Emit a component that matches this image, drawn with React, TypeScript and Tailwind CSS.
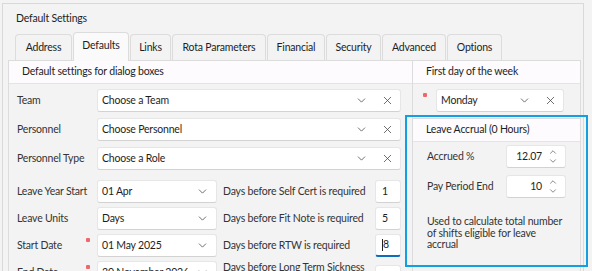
import React from 'react';
import { ChevronDown, ChevronUp, X } from 'lucide-react';

const tabs: Array<[string, string]> = [
  ['Address', 'w-[57px]'],
  ['Defaults', 'w-[56px]'],
  ['Links', 'w-[41px]'],
  ['Rota Parameters', 'w-[94px]'],
  ['Financial', 'w-[58px]'],
  ['Security', 'w-[55px]'],
  ['Advanced', 'w-[64px]'],
  ['Options', 'w-[55px]'],
];

function Star() {
  return <span className="mt-[4px] mr-[7px] h-[4px] w-[4px] rounded-[1px] bg-[#f0676b]" />;
}

function Select({ value, className, clear = true }: { value: string; className: string; clear?: boolean }) {
  return (
    <div className={`flex h-[23px] items-center rounded-[3px] border border-[#e6e6e6] border-b-[#d2d2d2] bg-white pl-[4px] ${className}`}>
      <span className="flex-1 truncate whitespace-nowrap">{value}</span>
      <ChevronDown
        size={13}
        strokeWidth={1.4}
        className={`shrink-0 text-[#444] ${clear ? 'mr-[13px]' : 'mr-[7px]'}`}
      />
      {clear && <X size={13} strokeWidth={1.4} className="mr-[6px] shrink-0 text-[#444]" />}
    </div>
  );
}

function SmallInput({ value, focused }: { value: string; focused?: boolean }) {
  return (
    <div
      className={`flex h-[23px] w-[26px] items-center rounded-[3px] border bg-white pl-[6px] ${
        focused ? 'border-[#e6e6e6] border-b-2 border-b-[#0f6cbd]' : 'border-[#e6e6e6] border-b-[#d2d2d2]'
      }`}
    >
      {focused && <span className="h-[12px] w-px bg-[#222]" />}
      {value}
    </div>
  );
}

function Spinner({ value }: { value: string }) {
  return (
    <div className="flex h-[23px] w-[60px] items-center rounded-[3px] border border-[#e6e6e6] border-b-[#d2d2d2] bg-white pr-[7px]">
      <span className="flex-1 pr-[6px] text-right">{value}</span>
      <div className="flex flex-col items-center text-[#444]">
        <ChevronUp size={10} strokeWidth={1.5} className="-mb-[1px]" />
        <ChevronDown size={10} strokeWidth={1.5} />
      </div>
    </div>
  );
}

function Row({ label, children, star }: { label: string; children: React.ReactNode; star?: boolean }) {
  return (
    <div className="flex h-[23px] items-start">
      <div className="flex h-full w-[80px] shrink-0 items-start justify-between">
        <span className="self-center whitespace-nowrap text-[#333]">{label}</span>
        {star && <Star />}
      </div>
      {children}
    </div>
  );
}

function DaysField({ label, value, focused }: { label: string; value: string; focused?: boolean }) {
  return (
    <div className="ml-[6px] flex flex-1 items-center">
      <span className="flex-1 whitespace-nowrap text-[#333]">{label}</span>
      <SmallInput value={value} focused={focused} />
    </div>
  );
}

export default function App() {
  return (
    <div className="h-[271px] w-[592px] overflow-hidden bg-[#f3f3f3] font-['Lato',sans-serif] text-[10.5px] tracking-[-0.2px] text-[#1e1e1e]">
      <div className="relative ml-[2px] mt-[3px] h-[300px] w-[582px] border-l border-r border-t border-[#d9d9d9] bg-[#f3f3f3]">
        <div className="h-[28px] pl-[13px] pt-[6px] leading-[16px]">Default Settings</div>

        <div className="ml-[12px] flex h-[28px] items-end gap-px">
          {tabs.map(([name, w]) =>
            name === 'Defaults' ? (
              <div
                key={name}
                className={`relative z-10 -mb-px flex h-[29px] items-center justify-center rounded-t-[4px] border border-b-0 border-[#dcdcdc] bg-[#fafafa] pb-[2px] ${w}`}
              >
                {name}
              </div>
            ) : (
              <div
                key={name}
                className={`flex h-[26px] items-center justify-center rounded-t-[4px] border border-b-0 border-[#dcdcdc] bg-[#f3f3f3] ${w}`}
              >
                {name}
              </div>
            )
          )}
        </div>

        <div className="ml-[5px] flex">
          <div className="w-[405px] border-l border-r border-t border-[#dcdcdc]">
            <div className="flex h-[23px] items-center border-b border-[#e4e4e4] bg-[#fdfbfd] pl-[13px]">
              Default settings for dialog boxes
            </div>
            <div className="pl-[8px] pr-[11px] pt-[5px]">
              <div className="flex flex-col gap-[6px]">
                <Row label="Team">
                  <Select value="Choose a Team" className="flex-1" />
                </Row>
                <Row label="Personnel">
                  <Select value="Choose Personnel" className="flex-1" />
                </Row>
                <Row label="Personnel Type">
                  <Select value="Choose a Role" className="flex-1" />
                </Row>
              </div>
              <div className="mt-[10px] flex flex-col gap-[4px]">
                <Row label="Leave Year Start">
                  <Select value="01 Apr" className="w-[120px]" clear={false} />
                  <DaysField label="Days before Self Cert is required" value="1" />
                </Row>
                <Row label="Leave Units">
                  <Select value="Days" className="w-[120px]" clear={false} />
                  <DaysField label="Days before Fit Note is required" value="5" />
                </Row>
                <Row label="Start Date" star>
                  <Select value="01 May 2025" className="w-[120px]" clear={false} />
                  <DaysField label="Days before RTW is required" value="8" focused />
                </Row>
                <Row label="End Date" star>
                  <Select value="30 November 2026" className="w-[120px]" clear={false} />
                  <div className="ml-[6px] flex flex-1 items-start">
                    <span className="flex-1 leading-[12px] text-[#333]">
                      Days before Long Term Sickness
                      <br />
                      is recorded
                    </span>
                    <div className="mt-[4px]">
                      <SmallInput value="20" />
                    </div>
                  </div>
                </Row>
              </div>
            </div>
          </div>

          <div className="w-[168px] border-r border-t border-[#dcdcdc]">
            <div className="flex h-[23px] items-center border-b border-[#e4e4e4] bg-[#fdfbfd] pl-[13px]">
              First day of the week
            </div>
            <div className="flex items-start pb-[5px] pl-[10px] pt-[5px]">
              <Star />
              <Select value="Monday" className="ml-[2px] w-[128px]" />
            </div>
            <div className="mt-[1px] border-t border-[#dcdcdc]">
              <div className="flex h-[23px] items-center border-b border-[#e4e4e4] bg-[#fdfbfd] pl-[13px]">
                Leave Accrual (0 Hours)
              </div>
              <div className="pl-[14px] pr-[14px] pt-[3px]">
                <div className="flex h-[23px] items-center justify-between">
                  <span className="text-[#333]">Accrued %</span>
                  <Spinner value="12.07" />
                </div>
                <div className="mt-[7px] flex h-[23px] items-center justify-between">
                  <span className="text-[#333]">Pay Period End</span>
                  <Spinner value="10" />
                </div>
                <p className="mt-[18px] leading-[11.5px] text-[#333]">
                  Used to calculate total number
                  <br />
                  of shifts eligible for leave
                  <br />
                  accrual
                </p>
              </div>
            </div>
            <div className="mt-[15px] border-t border-[#dcdcdc]" />
          </div>
        </div>

        <div className="pointer-events-none absolute left-[402px] top-[111px] h-[152px] w-[183px] border-[2.5px] border-[#12a0e3]" />
      </div>
    </div>
  );
}
